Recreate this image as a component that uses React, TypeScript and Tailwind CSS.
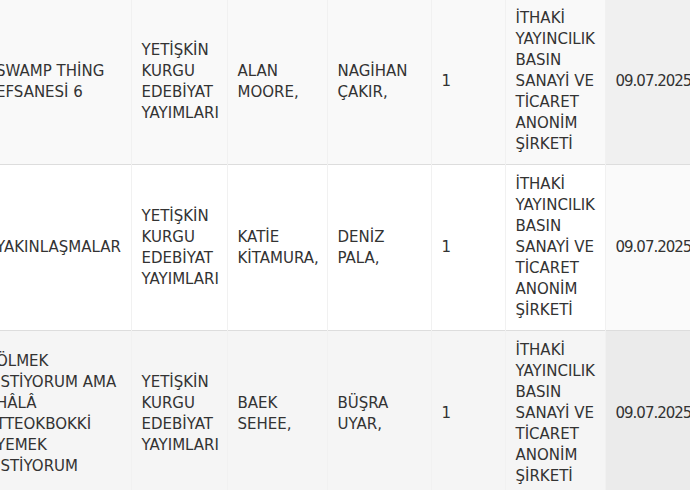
const rows = [
  {
    bg: "bg-[#f9f9f9]",
    sortBg: "bg-[#f0f0f0]",
    cells: [
      ["SWAMP THİNG", "EFSANESİ 6"],
      ["YETİŞKİN", "KURGU", "EDEBİYAT", "YAYIMLARI"],
      ["ALAN", "MOORE,"],
      ["NAGİHAN", "ÇAKIR,"],
      ["1"],
      ["İTHAKİ", "YAYINCILIK", "BASIN", "SANAYİ VE", "TİCARET", "ANONİM", "ŞİRKETİ"],
    ],
    date: "09.07.2025",
  },
  {
    bg: "bg-white",
    sortBg: "bg-[#fafafa]",
    cells: [
      ["YAKINLAŞMALAR"],
      ["YETİŞKİN", "KURGU", "EDEBİYAT", "YAYIMLARI"],
      ["KATİE", "KİTAMURA,"],
      ["DENİZ", "PALA,"],
      ["1"],
      ["İTHAKİ", "YAYINCILIK", "BASIN", "SANAYİ VE", "TİCARET", "ANONİM", "ŞİRKETİ"],
    ],
    date: "09.07.2025",
  },
  {
    bg: "bg-[#f5f5f5]",
    sortBg: "bg-[#ebebeb]",
    cells: [
      ["ÖLMEK", "İSTİYORUM AMA", "HÂLÂ", "TTEOKBOKKİ", "YEMEK", "İSTİYORUM"],
      ["YETİŞKİN", "KURGU", "EDEBİYAT", "YAYIMLARI"],
      ["BAEK", "SEHEE,"],
      ["BÜŞRA", "UYAR,"],
      ["1"],
      ["İTHAKİ", "YAYINCILIK", "BASIN", "SANAYİ VE", "TİCARET", "ANONİM", "ŞİRKETİ"],
    ],
    date: "09.07.2025",
  },
];

const widths = ["w-[145px]", "w-[96px]", "w-[100px]", "w-[104px]", "w-[74px]", "w-[100px]", "w-[100px]"];

export default function App() {
  return (
    <div className="h-[490px] w-[690px] overflow-hidden bg-white">
      <table
        className="-ml-[14px] -mt-[1px] w-[719px] table-fixed border-collapse text-[15px] leading-[21px] text-[#333]"
        style={{ fontFamily: '"DejaVu Sans", sans-serif' }}
      >
        <colgroup>
          {widths.map((w, i) => (
            <col key={i} className={w} />
          ))}
        </colgroup>
        <tbody>
          {rows.map((row, r) => (
            <tr key={r} className={`${row.bg} ${r > 0 ? "border-t border-[#dddddd]" : ""}`}>
              {row.cells.map((lines, c) => (
                <td
                  key={c}
                  className={`px-[10px] py-[9px] align-middle whitespace-nowrap ${c > 0 ? "border-l border-[#f1f1f1]" : ""}`}
                >
                  {lines.map((l, i) => (
                    <div key={i}>{l}</div>
                  ))}
                </td>
              ))}
              <td
                className={`${row.sortBg} border-l border-[#f1f1f1] px-[10px] py-[9px] align-middle whitespace-nowrap tracking-[-1px]`}
              >
                {row.date}
              </td>
            </tr>
          ))}
        </tbody>
      </table>
    </div>
  );
}
